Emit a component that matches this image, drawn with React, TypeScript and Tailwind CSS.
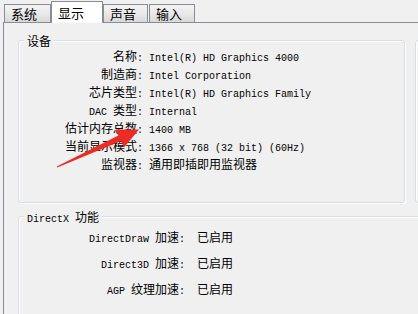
import React from "react";

// splits a string into ascii / cjk runs so latin can use a half-width mono face
function Mixed({ text }: { text: string }) {
    const parts = text.split(/([\x00-\x7f]+)/).filter((p) => p.length > 0);
    return (
        <>
            {parts.map((p, i) =>
                /^[\x00-\x7f]+$/.test(p) ? (
                    <span key={i} className="font-['Liberation_Mono',monospace] text-[10px] whitespace-pre">
                        {p}
                    </span>
                ) : (
                    <span key={i} className="font-['Noto_Sans_CJK_SC',sans-serif] text-[12px]">
                        {p}
                    </span>
                )
            )}
        </>
    );
}

function Tab({ label, active, className }: { label: string; active?: boolean; className: string }) {
    if (active) {
        return (
            <div
                className={`relative z-10 h-[22px] -mb-px pl-[6px] pt-[2px] bg-white border border-b-0 border-[#898c95] text-[13px] leading-[18px] font-['Noto_Sans_CJK_SC',sans-serif] text-black ${className}`}
            >
                {label}
            </div>
        );
    }
    return (
        <div
            className={`h-[18px] pl-[6px] bg-gradient-to-b from-[#f4f4f4] via-[#e9e9e9] to-[#d9d9d9] border border-b-0 border-[#898c95] text-[13px] leading-[18px] font-['Noto_Sans_CJK_SC',sans-serif] text-black ${className}`}
        >
            {label}
        </div>
    );
}

function GroupBox({ title, className, children }: { title?: string; className: string; children?: React.ReactNode }) {
    return (
        <div
            className={`relative shrink-0 border border-[#d5dfe5] rounded-[3px] shadow-[inset_1px_1px_0_#fff,1px_1px_0_#fff] ${className}`}
        >
            {title && (
                <div className="absolute -top-[8px] left-[5px] px-[3px] bg-[#f0f0f0] leading-[14px] text-black">
                    <Mixed text={title} />
                </div>
            )}
            {children}
        </div>
    );
}

const deviceRows = [
    ["名称:", "Intel(R) HD Graphics 4000"],
    ["制造商:", "Intel Corporation"],
    ["芯片类型:", "Intel(R) HD Graphics Family"],
    ["DAC 类型:", "Internal"],
    ["估计内存总数:", "1400 MB"],
    ["当前显示模式:", "1366 x 768 (32 bit) (60Hz)"],
    ["监视器:", "通用即插即用监视器"],
];

const dxRows = [
    ["DirectDraw 加速:", "已启用"],
    ["Direct3D 加速:", "已启用"],
    ["AGP 纹理加速:", "已启用"],
];

export default function App() {
    return (
        <div className="relative w-[418px] h-[314px] overflow-hidden bg-[#f0f0f0] text-black">
            {/* Tabs */}
            <div className="relative z-10 flex items-end h-[22px] pl-[4px]">
                <Tab label="系统" className="w-[47px]" />
                <Tab label="显示" active className="w-[52px]" />
                <Tab label="声音" className="w-[45px] pl-[4px]" />
                <Tab label="输入" className="w-[46px] ml-[1px] pl-[4px]" />
            </div>

            {/* Panel */}
            <div className="ml-[3px] h-[292px] border-l border-t border-[#898c95] pl-[14px] pt-[17px]">
                <div className="flex">
                    <GroupBox title="设备" className="w-[387px] h-[163px] pt-[5px]">
                        {deviceRows.map(([label, value]) => (
                            <div key={label} className="flex items-center h-[18px]">
                                <div className="w-[124px] text-right whitespace-nowrap">
                                    <Mixed text={label} />
                                </div>
                                <div className="ml-[6px] whitespace-nowrap">
                                    <Mixed text={value} />
                                </div>
                            </div>
                        ))}
                    </GroupBox>
                    <GroupBox className="ml-[10px] w-[200px] h-[163px]" />
                </div>

                <GroupBox title="DirectX 功能" className="mt-[13px] w-[420px] h-[120px] pt-[6px]">
                    {dxRows.map(([label, value]) => (
                        <div key={label} className="flex items-center h-[26px]">
                            <div className="w-[166px] text-right whitespace-nowrap">
                                <Mixed text={label} />
                            </div>
                            <div className="ml-[12px] whitespace-nowrap">
                                <Mixed text={value} />
                            </div>
                        </div>
                    ))}
                </GroupBox>
            </div>

            {/* Red annotation arrow */}
            <svg className="absolute inset-0 pointer-events-none" width="418" height="314" viewBox="0 0 418 314">
                <polygon
                    points="56.8,166.5 118.4,135.4 115.6,129.6 139,129.5 124.2,147.2 121.2,141.0 57.2,167.6"
                    fill="#ec2b24"
                />
            </svg>
        </div>
    );
}
